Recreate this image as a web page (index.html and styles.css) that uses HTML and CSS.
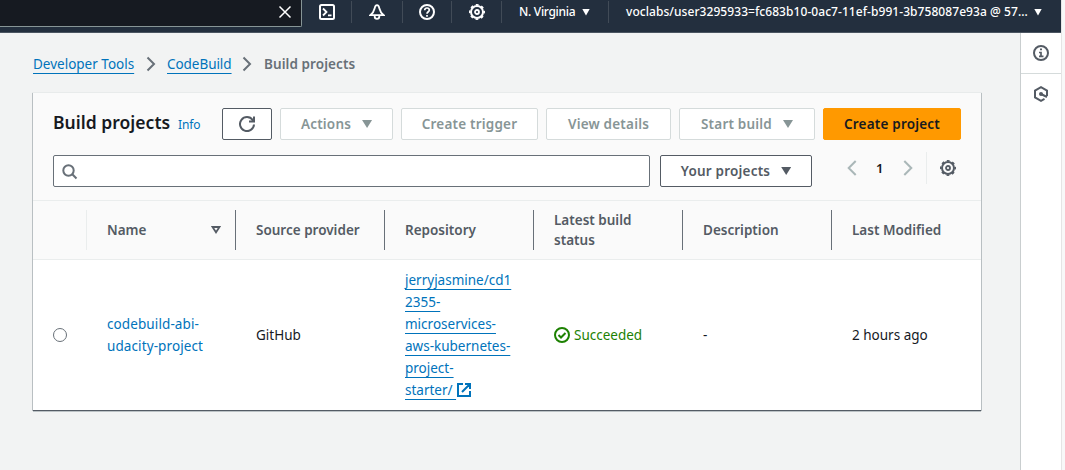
FILE: index.html
```html
<!DOCTYPE html>
<html lang="en">
<head>
<meta charset="utf-8">
<title>Build projects</title>
<link rel="stylesheet" href="styles.css">
</head>
<body>
<div class="window">
  <header class="topbar">
    <div class="search-global"><svg class="i16" viewBox="0 0 16 16"><path d="M2.5 2.5l11 11M13.5 2.5l-11 11" stroke="#fff" stroke-width="1.5"/></svg></div>
    <div class="tool shell"><svg class="i16" viewBox="0 0 16 16"><rect x="1" y="1" width="14" height="14" rx="1.5"/><path d="M4 4.500l3.500 3.500L4 11.500M9 11.300h3.500" stroke-width="1.800"/></svg></div>
    <div class="tool bell"><svg class="i16" viewBox="0 0 16 16"><path d="M1.300 11.200h13.400c-2.600-2-3.600-3.700-4.200-6.400C10.100 2.700 9.500 1.200 8 1.200S5.900 2.700 5.500 4.800c-.6 2.700-1.600 4.400-4.200 6.400zM5.700 11.500v1c0 1.400 1 2.300 2.300 2.300s2.300-.9 2.300-2.300v-1" stroke-width="1.800"/></svg></div>
    <div class="tool help"><svg class="i16" viewBox="0 0 16 16"><circle cx="8" cy="8" r="7"/><path d="M5.700 6.300C5.700 4.800 6.700 4 8 4s2.300.9 2.300 2.100C10.300 7.700 8 7.800 8 9.800M8 11v1.700" stroke-width="1.700"/></svg></div>
    <div class="tool gear"><svg class="i16" viewBox="0 0 16 16"><circle cx="8" cy="8" r="6"/><circle cx="8" cy="8" r="7.200" stroke-width="1.600" stroke-dasharray="2.827 2.827" stroke-dashoffset="1.413"/><circle cx="8" cy="8" r="2" stroke-width="1.800"/></svg></div>
    <div class="region"><span class="t-region">N. Virginia</span><i class="caret small"></i></div>
    <div class="account"><span class="t-account">voclabs/user3295933=fc683b10-0ac7-11ef-b991-3b758087e93a @ 57...</span><i class="caret small"></i></div>
  </header>
  <div class="body">
    <main class="main">
      <nav class="crumbs">
        <a class="link under t-dev">Developer Tools</a>
        <svg class="chev" viewBox="0 0 10 16"><path d="M1.500 1.500L8 8l-6.500 6.500"/></svg>
        <a class="link under t-code">CodeBuild</a>
        <svg class="chev second" viewBox="0 0 10 16"><path d="M1.500 1.500L8 8l-6.500 6.500"/></svg>
        <b class="here">Build projects</b>
      </nav>
      <section class="card">
        <div class="card-head">
          <div class="row">
            <h1 class="title">Build projects</h1><a class="link info">Info</a>
            <div class="actions">
              <div class="btn refresh"><svg class="i16" viewBox="0 0 16 16"><path d="M10 5.500h5V.5M15 8.500a7 7 0 1 1-1.300-4.500L15 5.500"/></svg></div>
              <div class="btn off w-actions"><span>Actions</span><i class="caret"></i></div>
              <div class="btn off w-trigger"><span>Create trigger</span></div>
              <div class="btn off w-view"><span>View details</span></div>
              <div class="btn off w-start"><span>Start build</span><i class="caret"></i></div>
              <div class="btn primary w-create"><span>Create project</span></div>
            </div>
          </div>
          <div class="row filters">
            <div class="search"><svg class="i16" viewBox="0 0 16 16"><circle cx="6.500" cy="6.500" r="5.200"/><path d="M10.300 10.300l4.200 4.200"/></svg></div>
            <div class="btn select"><span>Your projects</span><i class="caret"></i></div>
            <div class="pager"><svg class="arrow" viewBox="0 0 10 16"><path d="M8.700 1L1.700 8l7 7"/></svg><span>1</span><svg class="arrow" viewBox="0 0 10 16"><path d="M1.300 1l7 7-7 7"/></svg></div>
            <div class="prefs"><svg class="i16" viewBox="0 0 16 16"><circle cx="8" cy="8" r="6"/><circle cx="8" cy="8" r="7.200" stroke-width="1.600" stroke-dasharray="2.827 2.827" stroke-dashoffset="1.413"/><circle cx="8" cy="8" r="2" stroke-width="1.800"/></svg></div>
          </div>
        </div>
        <div class="grid thead">
          <div class="th first"></div>
          <div class="th"><span>Name</span><svg class="sort" viewBox="0 0 10 8"><path d="M1.500 1h7L5 6.300z"/></svg></div>
          <div class="th"><span>Source provider</span></div>
          <div class="th"><span>Repository</span></div>
          <div class="th"><span>Latest build<br>status</span></div>
          <div class="th"><span>Description</span></div>
          <div class="th"><span>Last Modified</span></div>
        </div>
        <div class="grid tbody">
          <div class="td pick"><i class="radio"></i></div>
          <div class="td"><a class="link name">codebuild-abi-<br>udacity-project</a></div>
          <div class="td"><span>GitHub</span></div>
          <div class="td"><a class="link under repo">jerryjasmine/cd1<br>2355-<br>microservices-<br>aws-kubernetes-<br>project-<br>starter/&nbsp;<svg class="ext" viewBox="0 0 14 14"><path d="M6 1H1v12h12V8M8 1h5v5M13 1L5 9"/></svg></a></div>
          <div class="td ok"><svg class="i16" viewBox="0 0 16 16"><circle cx="8" cy="8" r="7"/><path d="M4.500 8l2.500 2.500 4.500-4.500"/></svg><span>Succeeded</span></div>
          <div class="td"><span>-</span></div>
          <div class="td"><span>2 hours ago</span></div>
        </div>
      </section>
    </main>
    <aside class="side">
      <div class="side-item"><svg class="i16" viewBox="0 0 16 16"><circle cx="8" cy="8" r="7"/><path d="M7 4.300h2M6 7.500h2v4M6 11.300h4.500" stroke-width="1.700"/></svg></div>
      <div class="side-item last"><svg class="i16" viewBox="0 0 16 16"><path d="M14 10V4.500L8 1.200 2 4.500v7l6 3.300 3.500-1.900M8 8l6 3"/><circle class="dot" cx="8" cy="8" r="2"/></svg></div>
    </aside>
  </div>
</div>
</body>
</html>
```
FILE: styles.css
```css
* { box-sizing: border-box; }
body { margin: 0; width: 1065px; height: 470px; overflow: hidden; background: #f8f8f8; font: 13.5px/22px "Noto Sans", "Open Sans", sans-serif; color: #16191f; }
svg { fill: none; stroke: currentColor; stroke-width: 2; flex: none; display: block; }
.i16 { width: 16px; height: 16px; }
.window { width: 1062px; height: 470px; border-right: 1px solid #e5e5e5; display: flex; flex-direction: column; }
.topbar { height: 33px; flex: none; background: #232f3e; border-bottom: 1px solid #4b5561; display: flex; color: #fff; font-size: 12px; font-weight: 500; white-space: nowrap; }
.search-global { width: 302px; height: 27px; background: #161a21; border: solid #879596; border-width: 0 1px 1px 0; border-radius: 0 0 2px 0; display: flex; justify-content: flex-end; padding: 4px 8px 0 0; }
.tool { height: 22px; margin-top: 1px; border-right: 1px solid #414b57; padding-top: 3px; }
.shell { width: 50px; padding-left: 17px; }
.bell { width: 51px; padding-left: 17px; }
.help { width: 49px; padding-left: 16px; }
.gear { width: 50px; padding-left: 17px; }
.region { width: 107px; height: 22px; margin-top: 1px; border-right: 1px solid #414b57; display: flex; align-items: center; padding-left: 17px; gap: 6px; }
.account { display: flex; height: 22px; margin-top: 1px; align-items: center; padding-left: 17px; gap: 6px; }
.t-region { width: 57px; letter-spacing: -.3px; }
.t-account { width: 402px; letter-spacing: .06px; }
.caret { width: 10px; height: 8px; background: currentColor; clip-path: polygon(0 0, 100% 0, 50% 100%); flex: none; }
.caret.small { width: 8px; height: 7px; }
.body { flex: 1; display: flex; }
.main { flex: 1; background: #f2f3f3; padding: 20px 39px 0 33px; }
.crumbs { height: 22px; display: flex; align-items: center; white-space: nowrap; color: #687078; }
.chev { width: 10px; height: 16px; margin: 0 11px 0 12px; }
.chev.second { margin: 0 12px 0 10px; }
.link { color: #0073bb; }
.under { text-decoration: underline; text-decoration-thickness: 1px; text-underline-offset: 4px; text-decoration-skip-ink: none; }
.t-dev { width: 101px; }
.t-code { width: 65px; letter-spacing: -.05px; }
.here { font-weight: 600; letter-spacing: .08px; }
.card { margin-top: 18px; width: 948px; height: 317px; background: #fff; box-shadow: 0 1px 0 #545b64, 0 2px 0 #bcc2c5, 0 0 0 1px #b9bfc2, 0 -1px 0 #e8ebeb; border-top: 1px solid #fafafa; position: relative; }
.card::before { content: ""; position: absolute; top: -2px; left: -1px; right: -1px; height: 1px; background: #e8ebeb; }
.card-head { height: 107px; background: #fafafa; padding: 14px 20px 0; border-bottom: 1px solid #eaeded; }
.row { height: 32px; display: flex; white-space: nowrap; }
.title { margin: 0; width: 125px; font-size: 17.5px; line-height: 29px; font-weight: 600; letter-spacing: .03px; }
.info { font-size: 12px; line-height: 34px; width: 44px; letter-spacing: -.1px; }
.actions { display: flex; gap: 8px; }
.btn { height: 32px; border: 1px solid #545b64; border-radius: 2px; background: #fff; color: #545b64; display: flex; align-items: center; justify-content: center; font-weight: 600; font-size: 13.5px; letter-spacing: .2px; }
.btn .caret { margin-left: 11px; }
.off { color: #879596; border-color: #d5dbdb; }
.primary { background: #ff9900; border-color: #ff9900; color: #16191f; }
.refresh { width: 50px; }
.w-actions { width: 113px; }
.w-trigger { width: 137px; }
.w-view { width: 125px; }
.w-start { width: 136px; }
.w-create { width: 138px; }
.filters { margin-top: 15px; }
.search { width: 597px; height: 32px; border: 1px solid #687078; border-radius: 2px; background: #fff; color: #687078; padding: 8px; }
.select { width: 152px; margin-left: 10px; }
.pager { height: 26px; width: 114px; padding-left: 35px; display: flex; align-items: center; gap: 19px; }
.pager span { width: 8px; font-weight: 600; font-size: 13px; }
.arrow { width: 10px; height: 16px; color: #aab7b8; }
.prefs { height: 32px; margin-top: -3px; border-left: 1px solid #eaeded; padding: 8px 0 0 13px; color: #545b64; }
.grid { display: grid; grid-template-columns: 54px repeat(6, 149px); }
.thead { height: 59px; background: #fafafa; border-bottom: 1px solid #eaeded; align-items: center; }
.th { height: 40px; display: flex; align-items: center; padding-left: 20px; border-right: 1px solid #687078; font-weight: 600; font-size: 13.5px; line-height: 20px; color: #545b64; white-space: nowrap; }
.th.first { border-color: #eaeded; }
.th:last-child { border: 0; }
.sort { width: 10px; height: 8px; margin-left: auto; margin-right: 14px; stroke-width: 1.8; }
.tbody { height: 150px; }
.td { display: flex; align-items: center; padding-left: 20px; white-space: nowrap; }
.name { letter-spacing: .1px; }
.radio { width: 14px; height: 14px; border: 1px solid #687078; border-radius: 50%; background: #fff; }
.ext { display: inline-block; width: 14px; height: 14px; vertical-align: -2px; margin-left: 1px; }
.ok { color: #1d8102; gap: 4px; }
.side { width: 41px; background: #fff; border-left: 1px solid #c9cecf; color: #545b64; }
.side-item { height: 41px; padding: 12px 0 0 12px; border-bottom: 1px solid #d5dbdb; }
.side-item.last { border: 0; }
.dot { fill: #545b64; stroke: none; }
```
